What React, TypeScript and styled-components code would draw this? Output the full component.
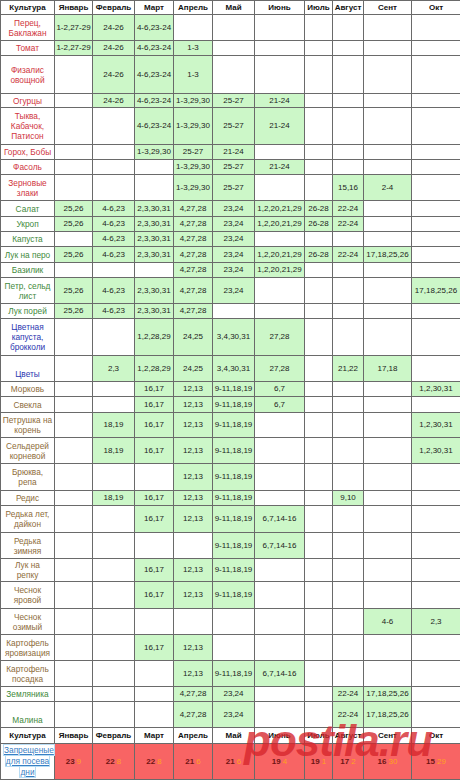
import React from 'react';
import styled, { createGlobalStyle } from 'styled-components';

const GlobalStyle = createGlobalStyle`
    body {
        margin: 0;
        background: #ffffff;
        font-family: "Liberation Sans", Arial, sans-serif;
    }
`;

type Tone = 'red' | 'green' | 'blue' | 'brown';

const toneColors: Record<Tone, string> = {
    red: '#d0363e',
    green: '#3f8a3c',
    blue: '#2a36b0',
    brown: '#8e6c3a',
};

const Page = styled.div`
    position: relative;
    width: 460px;
`;

const Table = styled.table`
    width: 460px;
    table-layout: fixed;
    border-collapse: collapse;
    font-size: 8px;
    line-height: 10px;
    color: #1c1c1c;
`;

const Row = styled.tr<{ $h: number }>`
    height: ${(p) => p.$h}px;
`;

const HeadCell = styled.th`
    border: 1px solid #6a6a6a;
    padding: 0 1px;
    font-weight: bold;
    text-align: center;
    color: #111;
    background: #fff;
    white-space: nowrap;
    overflow: hidden;
`;

const NameCell = styled.td<{ $tone: Tone }>`
    border: 1px solid #6a6a6a;
    padding: 1px 1px;
    text-align: center;
    color: ${(p) => toneColors[p.$tone]};
    white-space: pre-line;
    font-size: 8.3px;
`;

const DataCell = styled.td<{ $filled: boolean }>`
    border: 1px solid #6a6a6a;
    padding: 0 1px;
    text-align: center;
    white-space: nowrap;
    background: ${(p) => (p.$filled ? '#ccf7c8' : '#ffffff')};
`;

const BanLabelCell = styled.td`
    border: 1px solid #6a6a6a;
    padding: 1px 2px;
    text-align: center;
    background: #fff;
`;

const BanLink = styled.span`
    color: #3a80c4;
    text-decoration: underline;
    border: 1px solid #b8dcf4;
    line-height: 11px;
    font-size: 8.3px;
    -webkit-box-decoration-break: clone;
    box-decoration-break: clone;
`;

const BanCell = styled.td`
    border: 1px solid #6a6a6a;
    text-align: center;
    background: #f86464;
    white-space: nowrap;
`;

const BanMain = styled.span`
    color: #6e1414;
    font-weight: bold;
`;

const BanMoon = styled.span`
    color: #ffa21e;
    margin-left: 2px;
`;

const Watermark = styled.div`
    position: absolute;
    left: 244px;
    top: 716px;
    font-family: "Liberation Sans", Arial, sans-serif;
    font-style: italic;
    font-weight: bold;
    font-size: 44px;
    letter-spacing: -1px;
    color: rgba(214, 38, 44, 0.78);
    pointer-events: none;
`;

const widths = [54, 38, 42, 39, 39, 42, 50, 28, 31, 48, 49];
const months = ['Январь', 'Февраль', 'Март', 'Апрель', 'Май', 'Июнь', 'Июль', 'Август', 'Сент', 'Окт'];

type Crop = { name: string; tone: Tone; h: number; cells: string[] };

const e = '';
const salad = ['25,26', '4-6,23', '2,3,30,31', '4,27,28', '23,24', '1,2,20,21,29', '26-28', '22-24', e, e];

const crops: Crop[] = [
    { name: 'Перец,\nБаклажан', tone: 'red', h: 26, cells: ['1-2,27-29', '24-26', '4-6,23-24', e, e, e, e, e, e, e] },
    { name: 'Томат', tone: 'red', h: 15, cells: ['1-2,27-29', '24-26', '4-6,23-24', '1-3', e, e, e, e, e, e] },
    { name: 'Физалис\nовощной', tone: 'red', h: 38, cells: [e, '24-26', '4-6,23-24', '1-3', e, e, e, e, e, e] },
    { name: 'Огурцы', tone: 'red', h: 14, cells: [e, '24-26', '4-6,23-24', '1-3,29,30', '25-27', '21-24', e, e, e, e] },
    { name: 'Тыква,\nКабачок,\nПатисон', tone: 'red', h: 37, cells: [e, e, '4-6,23-24', '1-3,29,30', '25-27', '21-24', e, e, e, e] },
    { name: 'Горох, Бобы', tone: 'red', h: 15, cells: [e, e, '1-3,29,30', '25-27', '21-24', e, e, e, e, e] },
    { name: 'Фасоль', tone: 'red', h: 15, cells: [e, e, e, '1-3,29,30', '25-27', '21-24', e, e, e, e] },
    { name: 'Зерновые\nзлаки', tone: 'red', h: 26, cells: [e, e, e, '1-3,29,30', '25-27', e, e, '15,16', '2-4', e] },
    { name: 'Салат', tone: 'green', h: 16, cells: salad },
    { name: 'Укроп', tone: 'green', h: 15, cells: salad },
    { name: 'Капуста', tone: 'green', h: 15, cells: [e, '4-6,23', '2,3,30,31', '4,27,28', '23,24', e, e, e, e, e] },
    { name: 'Лук на перо', tone: 'green', h: 16, cells: ['25,26', '4-6,23', '2,3,30,31', '4,27,28', '23,24', '1,2,20,21,29', '26-28', '22-24', '17,18,25,26', e] },
    { name: 'Базилик', tone: 'green', h: 15, cells: [e, e, e, '4,27,28', '23,24', '1,2,20,21,29', e, e, e, e] },
    { name: 'Петр, сельд\nлист', tone: 'green', h: 26, cells: ['25,26', '4-6,23', '2,3,30,31', '4,27,28', '23,24', e, e, e, e, '17,18,25,26'] },
    { name: 'Лук порей', tone: 'green', h: 15, cells: ['25,26', '4-6,23', '2,3,30,31', '4,27,28', e, e, e, e, e, e] },
    { name: 'Цветная\nкапуста,\nброкколи', tone: 'blue', h: 37, cells: [e, e, '1,2,28,29', '24,25', '3,4,30,31', '27,28', e, e, e, e] },
    { name: '\nЦветы', tone: 'blue', h: 26, cells: [e, '2,3', '1,2,28,29', '24,25', '3,4,30,31', '27,28', e, '21,22', '17,18', e] },
    { name: 'Морковь', tone: 'brown', h: 15, cells: [e, e, '16,17', '12,13', '9-11,18,19', '6,7', e, e, e, '1,2,30,31'] },
    { name: 'Свекла', tone: 'brown', h: 16, cells: [e, e, '16,17', '12,13', '9-11,18,19', '6,7', e, e, e, e] },
    { name: 'Петрушка на\nкорень', tone: 'brown', h: 25, cells: [e, '18,19', '16,17', '12,13', '9-11,18,19', e, e, e, e, '1,2,30,31'] },
    { name: 'Сельдерей\nкорневой', tone: 'brown', h: 26, cells: [e, '18,19', '16,17', '12,13', '9-11,18,19', e, e, e, e, '1,2,30,31'] },
    { name: 'Брюква,\nрепа', tone: 'brown', h: 27, cells: [e, e, e, '12,13', '9-11,18,19', e, e, e, e, e] },
    { name: 'Редис', tone: 'brown', h: 15, cells: [e, '18,19', '16,17', '12,13', '9-11,18,19', e, e, '9,10', e, e] },
    { name: 'Редька лет,\nдайкон', tone: 'brown', h: 27, cells: [e, e, '16,17', '12,13', '9-11,18,19', '6,7,14-16', e, e, e, e] },
    { name: 'Редька\nзимняя', tone: 'brown', h: 26, cells: [e, e, e, e, '9-11,18,19', '6,7,14-16', e, e, e, e] },
    { name: 'Лук на\nрепку', tone: 'brown', h: 23, cells: [e, e, '16,17', '12,13', '9-11,18,19', e, e, e, e, e] },
    { name: 'Чеснок\nяровой', tone: 'brown', h: 27, cells: [e, e, '16,17', '12,13', '9-11,18,19', e, e, e, e, e] },
    { name: 'Чеснок\nозимый', tone: 'brown', h: 26, cells: [e, e, e, e, e, e, e, e, '4-6', '2,3'] },
    { name: 'Картофель\nяровизация', tone: 'brown', h: 26, cells: [e, e, '16,17', '12,13', e, e, e, e, e, e] },
    { name: 'Картофель\nпосадка', tone: 'brown', h: 26, cells: [e, e, e, '12,13', '9-11,18,19', '6,7,14-16', e, e, e, e] },
    { name: 'Земляника', tone: 'green', h: 15, cells: [e, e, e, '4,27,28', '23,24', e, e, '22-24', '17,18,25,26', e] },
    { name: '\nМалина', tone: 'green', h: 26, cells: [e, e, e, '4,27,28', '23,24', e, e, '22-24', '17,18,25,26', e] },
];

const banned: [string, string][] = [
    ['23', '9'], ['22', '8'], ['22', '8'], ['21', '6'], ['21', '6'],
    ['19', '4'], ['19', '1'], ['17', '2'], ['16', '30'], ['15', '29'],
];

const HeaderRow = ({ h }: { h: number }) => (
    <Row $h={h}>
        <HeadCell>Культура</HeadCell>
        {months.map((m) => (
            <HeadCell key={m}>{m}</HeadCell>
        ))}
    </Row>
);

const App = () => {
    return (
        <Page>
            <GlobalStyle />
            <Table>
                <colgroup>
                    {widths.map((w, i) => (
                        <col key={i} style={{ width: w }} />
                    ))}
                </colgroup>
                <tbody>
                    <HeaderRow h={14} />
                    {crops.map((c) => (
                        <Row key={c.name} $h={c.h}>
                            <NameCell $tone={c.tone}>{c.name}</NameCell>
                            {c.cells.map((v, i) => (
                                <DataCell key={i} $filled={v !== ''}>{v}</DataCell>
                            ))}
                        </Row>
                    ))}
                    <HeaderRow h={16} />
                    <Row $h={36}>
                        <BanLabelCell>
                            <BanLink>Запрещеные для посева дни</BanLink>
                        </BanLabelCell>
                        {banned.map(([d, m], i) => (
                            <BanCell key={i}>
                                <BanMain>{d}</BanMain>
                                <BanMoon>{m}</BanMoon>
                            </BanCell>
                        ))}
                    </Row>
                </tbody>
            </Table>
            <Watermark>postila.ru</Watermark>
        </Page>
    );
};

export default App;
